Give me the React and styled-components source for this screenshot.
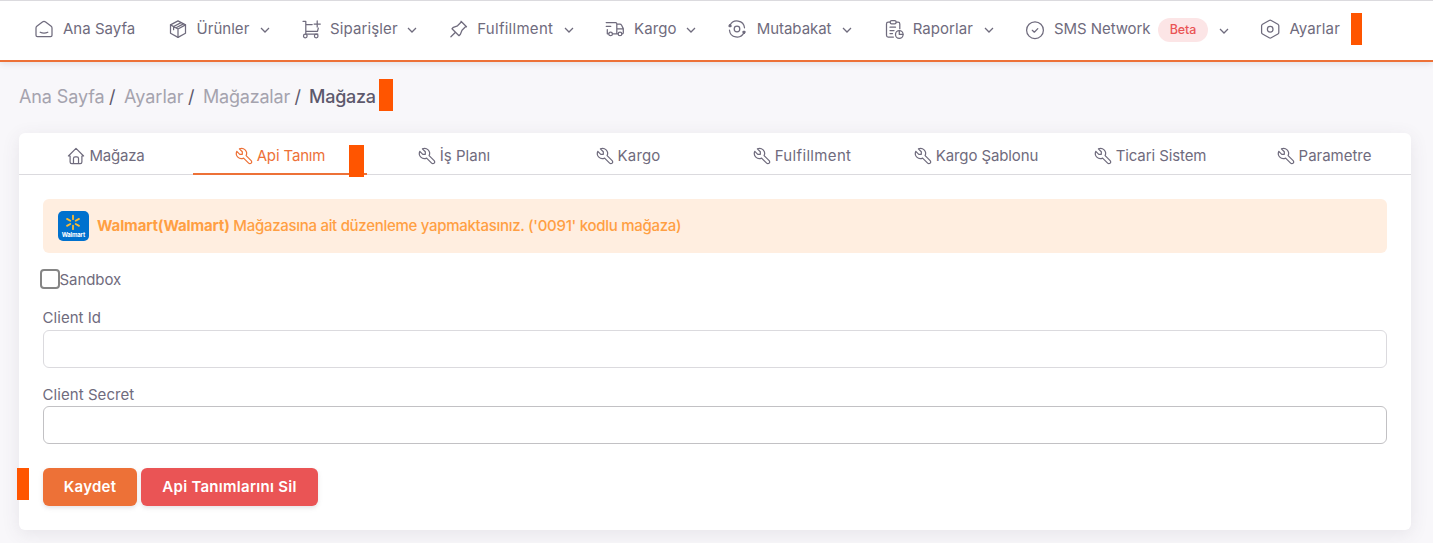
import React from 'react';
import styled, { createGlobalStyle } from 'styled-components';

const color = {
  text: '#6f6b7d',
  heading: '#5d596c',
  muted: '#a5a3ae',
  primary: '#ed7137',
  danger: '#ea5455',
  marker: '#ff5500',
  line: '#dbdade',
};

const GlobalStyle = createGlobalStyle`
  * { box-sizing: border-box; }
  body {
    margin: 0;
    background: #f8f7fa;
    color: ${color.text};
    font: 400 15px/22px Inter, "Noto Sans", sans-serif;
    overflow: hidden;
  }
`;

const Page = styled.div`
  position: relative;
  width: 1433px;
  height: 543px;
  overflow: hidden;
`;

const Label = styled.span`
  letter-spacing: ${(p) => p.$track || 0}px;
  white-space: nowrap;
`;

/* Top navigation */
const Navbar = styled.nav`
  display: flex;
  align-items: center;
  height: 62px;
  padding: 0 0 3px 35px;
  background: #fff;
  border-top: 1px solid ${color.line};
  border-bottom: 2px solid ${color.primary};
  box-shadow: 0 2px 6px rgba(75, 70, 92, 0.12);
`;

const NavItem = styled.a`
  display: flex;
  align-items: center;
  flex: none;
  width: ${(p) => p.$width}px;
`;

const NavIcon = styled.span`
  display: flex;
  flex: none;
  width: ${(p) => p.$width}px;
`;

const NavText = styled(Label)`
  flex: none;
  width: ${(p) => p.$width}px;
`;

const Chevron = styled.svg`
  flex: none;
  width: 10px;
  height: 6px;
  margin-top: ${(p) => (p.$low ? 4 : 2)}px;
`;

const Badge = styled.span`
  flex: none;
  width: 50px;
  height: 24px;
  margin: 2px 11px 0 4px;
  border-radius: 12px;
  background: #fce5e6;
  color: ${color.danger};
  font-size: 12.5px;
  font-weight: 500;
  line-height: 24px;
  letter-spacing: -0.1px;
  text-align: center;
`;

const Svg = styled.svg`
  flex: none;
  display: block;
  overflow: visible;
  fill: none;
  stroke: currentColor;
  stroke-width: ${(p) => p.$stroke || 1.25};
  stroke-linecap: round;
  stroke-linejoin: round;
`;

/* Breadcrumb */
const Breadcrumb = styled.div`
  display: flex;
  align-items: center;
  height: 24px;
  margin: 23px 0 24px 19px;
  font-size: 18px;
  color: ${color.muted};
`;

const Crumb = styled(Label)`
  width: ${(p) => p.$width}px;
  color: ${(p) => (p.$current ? color.heading : 'inherit')};
  font-weight: ${(p) => (p.$current ? 500 : 400)};
`;

const Separator = styled.span`
  width: ${(p) => p.$width}px;
  color: ${color.heading};
`;

/* Card and tabs */
const Card = styled.main`
  width: 1392px;
  height: 397px;
  margin-left: 19px;
  background: #fff;
  border-radius: 6px;
  box-shadow: 0 4px 18px rgba(75, 70, 92, 0.1);
`;

const Tabs = styled.div`
  display: grid;
  grid-template-columns: repeat(8, 1fr);
  height: 42px;
  box-shadow: inset 0 -1px ${color.line};
`;

const Tab = styled.div`
  display: flex;
  align-items: center;
  justify-content: center;
  gap: 5px;
  padding: 6px 0 0 1px;
  color: ${(p) => (p.$active ? color.primary : color.text)};
  border-bottom: 2px solid ${(p) => (p.$active ? color.primary : 'transparent')};
`;

const Body = styled.div`
  padding: 24px;
`;

const Alert = styled.div`
  display: flex;
  align-items: center;
  height: 54px;
  padding: 0 15px;
  border-radius: 6px;
  background: #ffeee0;
  color: #ff9f43;
`;

const StoreLogo = styled.svg`
  width: 31px;
  height: 30px;
  margin-right: 8px;
  flex: none;
`;

const AlertText = styled(Label)`
  font-weight: ${(p) => (p.$bold ? 700 : 500)};
  margin: -1px 3.5px 0 0;
`;

const CheckRow = styled.label`
  display: flex;
  align-items: center;
  height: 22px;
  margin: 16px 0 15px -4px;
`;

const CheckBox = styled.span`
  width: 20px;
  height: 20px;
  margin: -3px 0 0 0.5px;
  border: 2px solid #858585;
  border-radius: 4px;
  background: #fff;
`;

const Field = styled.div`
  display: flex;
  flex-direction: column;
  margin-bottom: ${(p) => p.$after}px;
`;

const FieldLabel = styled(Label)`
  height: 22px;
  margin: 1px 0 ${(p) => p.$gap}px -0.4px;
`;

const Input = styled.input`
  height: 38px;
  width: 100%;
  padding: 7px 14px;
  border: 1px solid ${(p) => (p.$strong ? '#c2c1c4' : color.line)};
  border-radius: 6px;
  background: #fff;
  outline: none;
`;

const Actions = styled.div`
  display: flex;
  gap: 4px;
`;

const Button = styled.button`
  width: ${(p) => p.$width}px;
  height: 38px;
  padding: 0;
  border: 0;
  border-radius: 6px;
  background: ${(p) => (p.$danger ? color.danger : color.primary)};
  color: #fff;
  font: inherit;
  font-weight: 600;
  letter-spacing: ${(p) => p.$track}px;
  box-shadow: 0 2px 4px rgba(165, 163, 174, 0.3);
`;

/* Highlight markers laid over the page */
const Marker = styled.i`
  position: absolute;
  left: ${(p) => p.$x}px;
  top: ${(p) => p.$y}px;
  width: ${(p) => p.$w}px;
  height: 32px;
  background: ${color.marker};
`;

const icons = {
  home: (
    <>
      <path d="M16.2 6.2 10.6 1.9a2.6 2.6 0 0 0-3.2 0L1.8 6.2C1.2 6.7 1 7.2 1 8v7.3c0 .9.6 1.4 1.4 1.4h13.2c.8 0 1.4-.5 1.4-1.4V8c0-.8-.2-1.3-.8-1.8Z" />
      <path d="M5.2 12.2c2.2 1 5.4 1 7.6 0" />
    </>
  ),
  box: (
    <>
      <path d="m9 .9 7.5 4v8.4L9 17.4l-7.5-4.1V4.9Z" />
      <path d="M1.5 4.9 9 9l7.5-4.1M9 9v8.4M4.6 6.5l7.5-3.9M7 7.8l7.5-3.9M4.6 6.5v3.2" />
    </>
  ),
  cart: (
    <>
      <path d="M1 1.3h2.8v12.8h12M3.8 4.6h6.4M3.8 11.4h11.7l.8-3.3M15.2.9v6.2M12.1 4h6.2" />
      <circle cx="3.3" cy="16" r="1.8" />
      <circle cx="14.2" cy="16" r="1.8" />
    </>
  ),
  pin: <path d="m11.5 1.8-4 4-4.1 1.5L2 8.7l7 7 1.4-1.4 1.6-4.1 4-4M5.5 12.2.9 16.8M11 1.3l5.5 5.5" />,
  truck: (
    <>
      <path d="M1.2 2.5h9.4c.8 0 1.2.4 1.2 1.2v10.1M1.2 6.3h4.6M2.3 9.6v4.2h1.4M7.4 13.8h5.8M11.8 4.2h3.1c.8 0 1.3.3 1.7 1l1.7 3.4v4.2c0 .7-.3 1-1 1h-.3M11.8 8.8h6.4" />
      <circle cx="5.6" cy="13.9" r="1.8" />
      <circle cx="15" cy="13.9" r="1.8" />
    </>
  ),
  sync: (
    <>
      <path d="M2 5.4A7.6 7.6 0 0 1 16.5 7.8M16 12.6A7.6 7.6 0 0 1 1.5 10.2" />
      <circle cx="9" cy="9" r="2.8" />
      <path d="M2 5.2v-.1M16 12.8v.1M2.5 6h-.9M15.5 12h1" strokeWidth="2.4" />
    </>
  ),
  report: (
    <>
      <path d="M5 2.2H3.2c-1.1 0-1.7.7-1.7 1.7v11.4c0 1.1.6 1.8 1.7 1.8h5.2M11.3 2.2h1.8c1.1 0 1.7.7 1.7 1.7v4.8" />
      <rect x="5.2" y=".6" width="5.9" height="3.2" rx="1.4" />
      <path d="M5 7.2h5.5M5 10.6h4M5 13.6h2.5M14.3 10.8v3.6h3.6" />
      <circle cx="14.3" cy="14.5" r="3.8" />
    </>
  ),
  check: (
    <>
      <circle cx="9" cy="10.2" r="8.4" />
      <path d="m6.3 10.3 2 1.9 3.5-3.6" />
    </>
  ),
  hexagon: (
    <>
      <path d="M8.2.5c.7-.4 1.3-.4 2 0l6.7 3.8c.6.4.9.8.9 1.5v6.7c0 .7-.3 1.2-.9 1.5l-6.7 3.8c-.7.4-1.3.4-2 0l-6.7-3.8c-.6-.3-.9-.8-.9-1.5V5.8c0-.7.3-1.1.9-1.5Z" />
      <circle cx="9.2" cy="9.2" r="2.8" />
    </>
  ),
};

const nav = [
  { icon: 'home', text: 'Ana Sayfa', width: 134, iconWidth: 28, track: 0.02 },
  { icon: 'box', text: 'Ürünler', width: 133, iconWidth: 27.6, textWidth: 63.4, track: 0.02 },
  { icon: 'cart', text: 'Siparişler', width: 148.2, iconWidth: 28, textWidth: 77.4, track: 0.12 },
  { icon: 'pin', text: 'Fulfillment', width: 154.8, iconWidth: 27, textWidth: 87.3, track: 0.28 },
  { icon: 'truck', text: 'Kargo', width: 123.5, iconWidth: 29, textWidth: 52.5, track: 0.1 },
  { icon: 'sync', text: 'Mutabakat', width: 156.5, iconWidth: 28.3, textWidth: 85.7, track: -0.06 },
  { icon: 'report', text: 'Raporlar', width: 141, iconWidth: 27.7, textWidth: 71.8, track: 0.05 },
  { icon: 'check', text: 'SMS Network', width: 235, iconWidth: 28, textWidth: 100, track: -0.07, badge: 'Beta' },
  { icon: 'hexagon', text: 'Ayarlar', width: 110, iconWidth: 28.4, track: 0.12 },
];

const tabs = [
  ['Mağaza', -0.2],
  ['Api Tanım', -0.15],
  ['İş Planı', 0.02],
  ['Kargo', 0.15],
  ['Fulfillment', 0.34],
  ['Kargo Şablonu', -0.12],
  ['Ticari Sistem', -0.1],
  ['Parametre', -0.02],
];

function TabIcon({ home }) {
  return (
    <Svg width="16" height="16" viewBox="2.5 2.5 19 19" $stroke={1.45}>
      {home ? (
        <path d="M5 12H3l9-9 9 9h-2M5 12v7a2 2 0 0 0 2 2h10a2 2 0 0 0 2-2v-7M9 21v-6a2 2 0 0 1 2-2h2a2 2 0 0 1 2 2v6" />
      ) : (
        <path d="M7 10h3V7L6.5 3.5a6 6 0 0 1 8 8l6 6a2 2 0 0 1-3 3l-6-6a6 6 0 0 1-8-8L7 10" />
      )}
    </Svg>
  );
}

export default function App() {
  return (
    <Page>
      <GlobalStyle />
      <Navbar>
        {nav.map((n) => (
          <NavItem key={n.text} $width={n.width}>
            <NavIcon $width={n.iconWidth}>
              <Svg width="18" height="18" viewBox="0 0 18 18">{icons[n.icon]}</Svg>
            </NavIcon>
            <NavText $width={n.textWidth} $track={n.track}>{n.text}</NavText>
            {n.badge && <Badge>{n.badge}</Badge>}
            {n.textWidth && (
              <Chevron viewBox="0 0 10 6" fill="none" stroke="currentColor" strokeWidth="1.25" $low={!!n.badge}>
                <path d="m1 1 4 4 4-4" />
              </Chevron>
            )}
          </NavItem>
        ))}
      </Navbar>

      <Breadcrumb>
        <Crumb $width={90} $track={-0.12}>Ana Sayfa</Crumb>
        <Separator $width={15}>/</Separator>
        <Crumb $width={64} $track={0}>Ayarlar</Crumb>
        <Separator $width={15}>/</Separator>
        <Crumb $width={91.5} $track={-0.2}>Mağazalar</Crumb>
        <Separator $width={14.5}>/</Separator>
        <Crumb $width={70} $track={-0.25} $current>Mağaza</Crumb>
      </Breadcrumb>

      <Card>
        <Tabs>
          {tabs.map(([text, track], i) => (
            <Tab key={text} $active={i === 1}>
              <TabIcon home={i === 0} />
              <Label $track={track}>{text}</Label>
            </Tab>
          ))}
        </Tabs>
        <Body>
          <Alert>
            <StoreLogo viewBox="0 0 31 30">
              <rect width="31" height="30" rx="5" fill="#0071ce" />
              <g stroke="#fdbb30" strokeWidth="1.8" strokeLinecap="round">
                <path d="M15 4.6v3.6M15 14.6v3.6M9 7.9l3.3 1.9M17.7 13l3.3 1.9M9 14.9l3.3-1.9M17.7 9.8 21 7.9" />
              </g>
              <text x="15.4" y="25.5" fill="#fff" fontSize="6" fontWeight="700" textAnchor="middle" textLength="23.5">Walmart</text>
            </StoreLogo>
            <AlertText $bold $track={-0.13}>Walmart(Walmart)</AlertText>
            <AlertText $track={-0.29}>Mağazasına ait düzenleme yapmaktasınız. ('0091' kodlu mağaza)</AlertText>
          </Alert>
          <CheckRow>
            <CheckBox />
            <Label $track={-0.08}>Sandbox</Label>
          </CheckRow>
          <Field $after={15}>
            <FieldLabel $gap={1} $track={0.02}>Client Id</FieldLabel>
            <Input />
          </Field>
          <Field $after={24}>
            <FieldLabel $gap={0} $track={0.05}>Client Secret</FieldLabel>
            <Input $strong />
          </Field>
          <Actions>
            <Button $width={94} $track={0.27}>Kaydet</Button>
            <Button $width={177} $track={0.28} $danger>Api Tanımlarını Sil</Button>
          </Actions>
        </Body>
      </Card>

      <Marker $x={1351.4} $y={13.4} $w={10.8} />
      <Marker $x={379} $y={79} $w={13.8} />
      <Marker $x={348.5} $y={144.6} $w={15.5} />
      <Marker $x={16.8} $y={467.5} $w={12} />
    </Page>
  );
}
